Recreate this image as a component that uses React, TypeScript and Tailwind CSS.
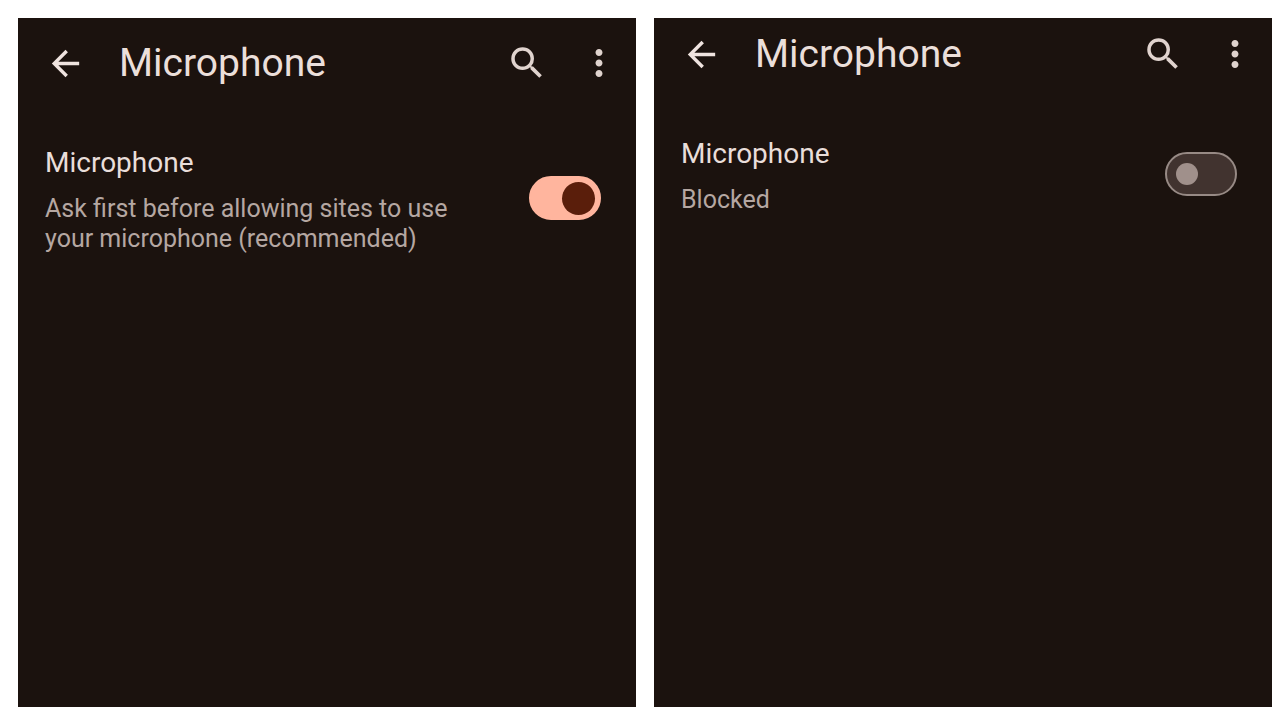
import React, { useId, useState } from 'react';
import { MdArrowBack, MdMoreVert, MdSearch } from 'react-icons/md';

interface MicrophonePanelProps {
  defaultEnabled: boolean;
  className?: string;
}

const Toggle: React.FC<{ id: string; checked: boolean; onChange: (checked: boolean) => void }> = ({
  id,
  checked,
  onChange,
}) => (
  <label htmlFor={id} className="grid shrink-0 cursor-pointer items-center">
    <input
      id={id}
      type="checkbox"
      role="switch"
      checked={checked}
      onChange={(e) => onChange(e.target.checked)}
      className="peer col-start-1 row-start-1 h-11 w-18 cursor-pointer appearance-none rounded-full border-2 border-[#978a85] bg-[#41332f] checked:border-[#ffb59e] checked:bg-[#ffb59e]"
    />
    {/* Thumb */}
    <span className="pointer-events-none col-start-1 row-start-1 ml-[11px] size-[22px] rounded-full bg-[#a0908b] peer-checked:mr-[6px] peer-checked:size-[33px] peer-checked:justify-self-end peer-checked:bg-[#5a1e0b]" />
  </label>
);

const MicrophonePanel: React.FC<MicrophonePanelProps> = ({ defaultEnabled, className }) => {
  const [enabled, setEnabled] = useState(defaultEnabled);
  const id = useId();

  return (
    <section className={`min-w-0 flex-1 bg-[#1b120e] ${className ?? ''}`}>
      {/* App bar */}
      <header className="flex items-center pr-4 pl-[27px] text-[#e0d3ce]">
        <button type="button" aria-label="Back" className="text-[#efe3df]">
          <MdArrowBack size={41} />
        </button>
        <h1 className="ml-[33px] flex-1 text-[39px] leading-[42px] text-[#ebdfda]">Microphone</h1>
        <button type="button" aria-label="Search">
          <MdSearch size={42} />
        </button>
        <button type="button" aria-label="More options" className="ml-[30px]">
          <MdMoreVert size={42} />
        </button>
      </header>

      {/* Permission row */}
      <div className="mt-[58px] flex items-center justify-between gap-4 pr-[35px] pl-[27px]">
        <div className="max-w-[420px]">
          <h2 className="text-[28px] leading-[42px] text-[#e9deda]">
            <label htmlFor={id}>Microphone</label>
          </h2>
          <p className="mt-2.5 text-[25px] leading-[30px] text-[#b5a7a2]">
            {enabled ? 'Ask first before allowing sites to use your microphone (recommended)' : 'Blocked'}
          </p>
        </div>
        <Toggle id={id} checked={enabled} onChange={setEnabled} />
      </div>
    </section>
  );
};

export default function App() {
  return (
    <main className="flex min-h-screen gap-[18px] bg-white pt-[18px] pr-2 pb-[13px] pl-[18px] font-[Roboto,sans-serif]">
      <MicrophonePanel defaultEnabled className="pt-6" />
      <MicrophonePanel defaultEnabled={false} className="pt-[15px]" />
    </main>
  );
}
